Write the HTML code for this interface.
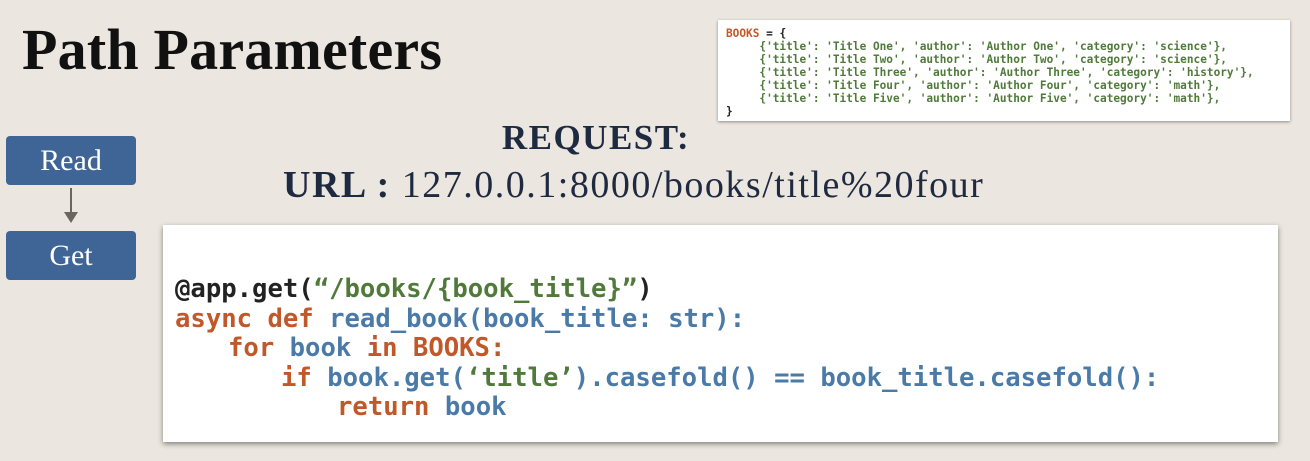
<!DOCTYPE html>
<html><head><meta charset="utf-8"><style>
body{margin:0;width:1310px;height:461px;overflow:hidden;background:#ebe6df;position:relative;font-family:"Liberation Serif",serif}
.a{position:absolute}
.title{left:22px;top:16px;font-size:58px;font-weight:bold;color:#111;letter-spacing:0.2px}
.btn{left:6px;width:130px;height:49px;background:#3e6596;border-radius:4px;color:#fff;font-size:30px;text-align:center;line-height:49px}
.snip{left:718px;top:20px;width:572px;height:101px;background:#fff;box-shadow:0 1px 3px rgba(0,0,0,.4);font-family:"DejaVu Sans Mono",monospace;font-weight:bold;font-size:11.1px;line-height:13px;color:#4f7a3a;white-space:pre;box-sizing:border-box;padding:7px 0 0 8px}
.code{left:163px;top:225px;width:1115px;height:217px;background:#fff;box-shadow:0 2px 5px rgba(0,0,0,.45);font-family:"DejaVu Sans Mono",monospace;font-weight:bold;font-size:25.6px;line-height:29.5px;white-space:pre;box-sizing:border-box;padding:50px 0 0 12px}
.o{color:#c0582a}.b{color:#4a7aa8}.g{color:#4f7a3a}.k{color:#222}
.req{left:0;width:1192px;text-align:center;color:#1e2a40}
</style></head><body>
<div class="a title">Path Parameters</div>
<div class="a snip"><span class="o">BOOKS</span><span class="k"> = {</span>
     {'title': 'Title One', 'author': 'Author One', 'category': 'science'},
     {'title': 'Title Two', 'author': 'Author Two', 'category': 'science'},
     {'title': 'Title Three', 'author': 'Author Three', 'category': 'history'},
     {'title': 'Title Four', 'author': 'Author Four', 'category': 'math'},
     {'title': 'Title Five', 'author': 'Author Five', 'category': 'math'},
<span class="k">}</span></div>
<div class="a req" style="top:118px;font-size:35px;font-weight:bold;letter-spacing:1.5px">REQUEST:</div>
<div class="a" style="left:283px;top:163px;font-size:38px;letter-spacing:1.5px;color:#1e2a40;white-space:nowrap"><b>URL :</b> 127.0.0.1:8000/books/title%20four</div>
<div class="a btn" style="top:136px">Read</div>
<div class="a" style="left:70px;top:188px;width:2px;height:27px;background:#6a6560"></div>
<div class="a" style="left:64px;top:212px;width:0;height:0;border-left:7px solid transparent;border-right:7px solid transparent;border-top:11px solid #6a6560"></div>
<div class="a btn" style="top:231px">Get</div>
<div class="a code"><span class="k">@app.get(</span><span class="g">“/books/{book_title}”</span><span class="k">)</span>
<span class="o">async def </span><span class="b">read_book(book_title: str):</span>
<span style="padding-left:53px"></span><span class="o">for </span><span class="b">book </span><span class="o">in BOOKS:</span>
<span style="padding-left:106px"></span><span class="o">if </span><span class="b">book.get(</span><span class="g">‘title’</span><span class="b">).casefold() == book_title.casefold():</span>
<span style="padding-left:162px"></span><span class="o">return </span><span class="b">book</span></div>
</body></html>
